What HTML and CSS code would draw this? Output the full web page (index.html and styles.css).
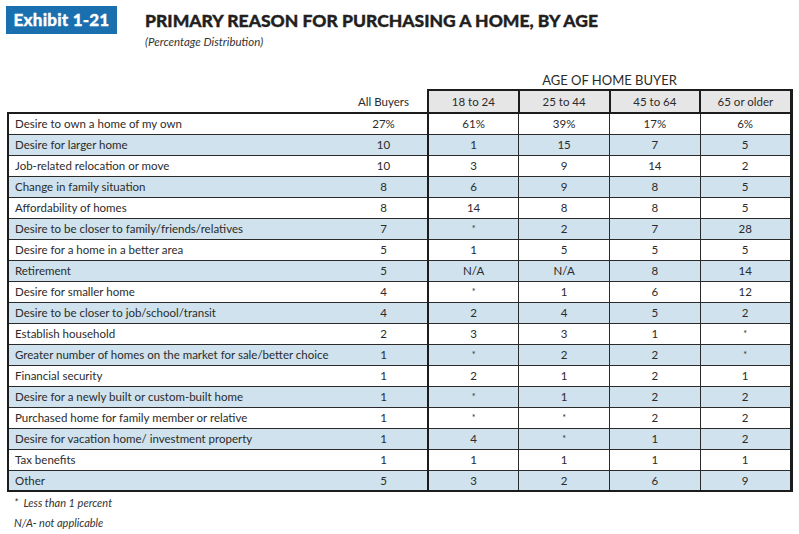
FILE: index.html
```html
<!DOCTYPE html>
<html>
<head>
<meta charset="utf-8">
<link rel="stylesheet" href="styles.css">
</head>
<body>
<header class="head">
  <div class="badge">Exhibit 1-21</div>
  <div class="titles">
    <h1 class="title">PRIMARY REASON FOR PURCHASING A HOME, BY AGE</h1>
    <p class="subtitle">(Percentage Distribution)</p>
  </div>
</header>
<table class="data">
  <colgroup>
    <col class="c-label"><col class="c-all"><col class="c-age"><col class="c-age"><col class="c-age"><col class="c-age">
  </colgroup>
  <thead>
    <tr class="group-row">
      <th></th><th></th>
      <th colspan="4" class="group">AGE OF HOME BUYER</th>
    </tr>
    <tr class="col-row">
      <th></th>
      <th class="all-head">All Buyers</th>
      <th class="age-head first">18 to 24</th>
      <th class="age-head">25 to 44</th>
      <th class="age-head">45 to 64</th>
      <th class="age-head last">65 or older</th>
    </tr>
  </thead>
  <tbody>
    <tr><td class="lab">Desire to own a home of my own</td><td>27%</td><td class="first">61%</td><td>39%</td><td>17%</td><td class="last">6%</td></tr>
    <tr class="alt"><td class="lab">Desire for larger home</td><td>10</td><td class="first">1</td><td>15</td><td>7</td><td class="last">5</td></tr>
    <tr><td class="lab">Job-related relocation or move</td><td>10</td><td class="first">3</td><td>9</td><td>14</td><td class="last">2</td></tr>
    <tr class="alt"><td class="lab">Change in family situation</td><td>8</td><td class="first">6</td><td>9</td><td>8</td><td class="last">5</td></tr>
    <tr><td class="lab">Affordability of homes</td><td>8</td><td class="first">14</td><td>8</td><td>8</td><td class="last">5</td></tr>
    <tr class="alt"><td class="lab">Desire to be closer to family/friends/relatives</td><td>7</td><td class="first"><span class="star">*</span></td><td>2</td><td>7</td><td class="last">28</td></tr>
    <tr><td class="lab">Desire for a home in a better area</td><td>5</td><td class="first">1</td><td>5</td><td>5</td><td class="last">5</td></tr>
    <tr class="alt"><td class="lab">Retirement</td><td>5</td><td class="first">N/A</td><td>N/A</td><td>8</td><td class="last">14</td></tr>
    <tr><td class="lab">Desire for smaller home</td><td>4</td><td class="first"><span class="star">*</span></td><td>1</td><td>6</td><td class="last">12</td></tr>
    <tr class="alt"><td class="lab">Desire to be closer to job/school/transit</td><td>4</td><td class="first">2</td><td>4</td><td>5</td><td class="last">2</td></tr>
    <tr><td class="lab">Establish household</td><td>2</td><td class="first">3</td><td>3</td><td>1</td><td class="last"><span class="star">*</span></td></tr>
    <tr class="alt"><td class="lab">Greater number of homes on the market for sale/better choice</td><td>1</td><td class="first"><span class="star">*</span></td><td>2</td><td>2</td><td class="last"><span class="star">*</span></td></tr>
    <tr><td class="lab">Financial security</td><td>1</td><td class="first">2</td><td>1</td><td>2</td><td class="last">1</td></tr>
    <tr class="alt"><td class="lab">Desire for a newly built or custom-built home</td><td>1</td><td class="first"><span class="star">*</span></td><td>1</td><td>2</td><td class="last">2</td></tr>
    <tr><td class="lab">Purchased home for family member or relative</td><td>1</td><td class="first"><span class="star">*</span></td><td><span class="star">*</span></td><td>2</td><td class="last">2</td></tr>
    <tr class="alt"><td class="lab">Desire for vacation home/ investment property</td><td>1</td><td class="first">4</td><td><span class="star">*</span></td><td>1</td><td class="last">2</td></tr>
    <tr><td class="lab">Tax benefits</td><td>1</td><td class="first">1</td><td>1</td><td>1</td><td class="last">1</td></tr>
    <tr class="alt lastrow"><td class="lab">Other</td><td>5</td><td class="first">3</td><td>2</td><td>6</td><td class="last">9</td></tr>
  </tbody>
</table>
<footer class="notes">
  <p class="note">*&nbsp; Less than 1 percent</p>
  <p class="note">N/A- not applicable</p>
</footer>
</body>
</html>
```

FILE: styles.css
```css
html, body {
  margin: 0;
  padding: 0;
  background: #ffffff;
}
body {
  font-family: Lato, "Open Sans", sans-serif;
  color: #2b2b2b;
  width: 799px;
  height: 534px;
  overflow: hidden;
}
.head {
  display: flex;
  align-items: flex-start;
  padding: 6px 0 0 6px;
  height: 62px;
  box-sizing: border-box;
}
.badge {
  width: 111px;
  height: 28px;
  background: #1a6fae;
  color: #ffffff;
  font-weight: 900;
  font-size: 17px;
  line-height: 28px;
  text-align: center;
  letter-spacing: 0.2px;
  -webkit-text-stroke: 0.3px #ffffff;
}
.titles {
  margin-left: 28px;
  padding-top: 4px;
}
.title {
  margin: 0;
  font-size: 17.5px;
  font-weight: 900;
  line-height: 22px;
  color: #231f20;
  -webkit-text-stroke: 0.35px #231f20;
}
.subtitle {
  margin: 3px 0 0;
  font-size: 11.5px;
  font-style: italic;
  line-height: 14px;
  color: #333;
}
.data {
  margin-left: 7px;
  border-collapse: collapse;
  table-layout: fixed;
  width: 783px;
  font-size: 11.5px;
}
.c-label { width: 332px; }
.c-all { width: 88px; }
.c-age { width: 90.75px; }
.data th, .data td {
  padding: 0;
  font-weight: normal;
  text-align: center;
  white-space: nowrap;
}
.group-row th {
  height: 28px;
  font-size: 13px;
  vertical-align: top;
  line-height: 16px;
  padding-top: 10px;
  box-sizing: border-box;
}
.col-row th {
  height: 21px;
  line-height: 19px;
}
.age-head {
  background: #e6e6e6;
  border: 2px solid #1c1c1c;
  border-bottom: none;
  border-left-width: 1px;
}
.age-head.first { border-left-width: 2px; }
.age-head.last { border-right-width: 3px; }
.data tbody tr {
  height: 21px;
}
.data tbody td {
  border-bottom: 1px solid #2a2a2a;
  border-left: 1px solid #2a2a2a;
  line-height: 19px;
}
.data tbody tr:first-child td {
  border-top: 2px solid #1c1c1c;
}
.data tbody td.lab {
  text-align: left;
  padding-left: 6px;
  border-left: 2px solid #1c1c1c;
}
.data tbody td.lab + td {
  border-left: none;
}
.data tbody td.first { border-left: 2px solid #1c1c1c; }
.data tbody td.last { border-right: 3px solid #1c1c1c; }
.data tbody tr.lastrow td { border-bottom: 2px solid #1c1c1c; }
.data tbody tr.alt td { background: #cfe2ed; }
.star {
  font-size: 9px;
  vertical-align: 2px;
}
.notes {
  padding: 4px 0 0 14px;
}
.note {
  margin: 0 0 6px;
  font-size: 11px;
  font-style: italic;
  line-height: 14px;
  color: #333;
}
```
